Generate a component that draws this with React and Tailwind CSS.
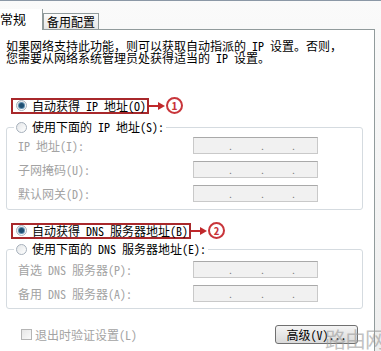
import React from 'react';

const font = { fontFamily: '"Noto Sans Mono CJK SC", "Noto Sans CJK SC", "Liberation Sans", sans-serif' };

const Radio = ({ checked }) => (
  <span className="flex h-[11px] w-[11px] shrink-0 items-center justify-center rounded-full border border-[#a6b0bb] bg-gradient-to-br from-[#e4e6e8] to-[#ffffff]">
    {checked && <span className="h-[5px] w-[5px] rounded-full bg-[#1f4f72] ring-1 ring-[#5f8fb0]" />}
  </span>
);

const Marker = ({ n }) => (
  <div className="flex items-center">
    <svg width="17" height="10" viewBox="0 0 17 10">
      <line x1="0" y1="5" x2="10" y2="5" stroke="#c0282b" strokeWidth="2" />
      <polygon points="9,1 16,5 9,9" fill="#c0282b" />
    </svg>
    <span className="flex h-[17px] w-[17px] items-center justify-center rounded-full border-2 border-[#c8353a] text-[11px] font-bold leading-none text-[#c8353a]">
      {n}
    </span>
  </div>
);

const IpBox = () => (
  <div className="flex h-[17px] w-[125px] items-center border border-[#c9c9c9] border-t-[#a9a9a9] bg-[#f1f1f1] pl-[34px] text-[10px] leading-none text-[#777]">
    <span className="w-[32px]">.</span>
    <span className="w-[31px]">.</span>
    <span>.</span>
  </div>
);

const Row = ({ label }) => (
  <div className="grid grid-cols-[175px_125px] items-center">
    <span className="whitespace-nowrap text-[12px] leading-none text-[#a3a3a3]">{label}</span>
    <IpBox />
  </div>
);

export default function App() {
  return (
    <div className="relative h-[351px] w-[381px] overflow-hidden bg-gradient-to-b from-[#fafafa] to-[#eeeeee] text-black" style={font}>
      <div className="h-px bg-[#8b98a6]" />
      {/* tabs */}
      <div className="flex h-[28px] items-end">
        <div className="relative z-10 -mb-px flex h-[21px] w-[43px] items-center border-r border-[#919b9c] bg-white pb-[2px] text-[13px] leading-none">
          常规
        </div>
        <div className="flex h-[16px] w-[56px] items-center justify-center border border-b-0 border-[#919b9c] bg-gradient-to-b from-[#fbfbfb] to-[#e6e6e6] text-[12px] leading-none">
          备用配置
        </div>
      </div>

      {/* panel */}
      <div className="flex h-[323px] w-[375px] flex-col border-t border-r border-[#919b9c] bg-white">
        <p className="whitespace-nowrap pl-[6px] pt-[10px] text-[12px] leading-[12px]">
          如果网络支持此功能，则可以获取自动指派的 IP 设置。否则，
          <br />
          您需要从网络系统管理员处获得适当的 IP 设置。
        </p>

        {/* IP */}
        <div className="ml-[11px] mt-[33px] flex items-center">
          <div className="flex h-[16px] items-center gap-[5px] whitespace-nowrap border-2 border-[#a8282b] pl-[3px] pr-[1px] text-[12px] leading-none">
            <Radio checked />
            <span>自动获得 IP 地址(O)</span>
          </div>
          <Marker n="1" />
        </div>
        <fieldset className="ml-[6px] mt-[6px] w-[357px] rounded-[3px] border border-[#d5dbe0] pb-[7px]">
          <legend className="ml-[7px] flex h-[14px] items-center gap-[5px] whitespace-nowrap px-[2px] text-[12px] leading-none">
            <Radio />
            <span>使用下面的 IP 地址(S):</span>
          </legend>
          <div className="flex flex-col gap-[7px] pl-[11px] pt-[3px]">
            <Row label="IP 地址(I):" />
            <Row label="子网掩码(U):" />
            <Row label="默认网关(D):" />
          </div>
        </fieldset>

        {/* DNS */}
        <div className="ml-[11px] mt-[12px] flex items-center">
          <div className="flex h-[16px] items-center gap-[5px] whitespace-nowrap border-2 border-[#a8282b] pl-[3px] pr-[1px] text-[12px] leading-none">
            <Radio checked />
            <span>自动获得 DNS 服务器地址(B)</span>
          </div>
          <Marker n="2" />
        </div>
        <fieldset className="ml-[6px] mt-[3px] w-[357px] rounded-[3px] border border-[#d5dbe0] pb-[6px]">
          <legend className="ml-[7px] flex h-[14px] items-center gap-[5px] whitespace-nowrap px-[2px] text-[12px] leading-none">
            <Radio />
            <span>使用下面的 DNS 服务器地址(E):</span>
          </legend>
          <div className="flex flex-col gap-[7px] pl-[11px] pt-[5px]">
            <Row label="首选 DNS 服务器(P):" />
            <Row label="备用 DNS 服务器(A):" />
          </div>
        </fieldset>

        {/* bottom */}
        <div className="mt-[16px] flex items-center justify-between pl-[21px] pr-[16px]">
          <div className="flex items-center gap-[3px] whitespace-nowrap text-[12px] leading-none text-[#a3a3a3]">
            <span className="h-[11px] w-[11px] border border-[#b5b5b5] bg-gradient-to-br from-[#e6e6e6] to-[#fafafa]" />
            <span>退出时验证设置(L)</span>
          </div>
          <button className="flex h-[19px] w-[83px] items-center justify-center whitespace-nowrap rounded-[3px] border border-[#707070] bg-gradient-to-b from-[#f4f4f4] to-[#dadada] text-[12px] leading-none">
            高级(V)...
          </button>
        </div>
      </div>

      {/* watermark */}
      <div className="pointer-events-none absolute bottom-[2px] right-[-4px] whitespace-nowrap text-[21px] leading-none tracking-[-1px] text-[#9a9a9a] opacity-60" style={{ fontFamily: '"Noto Sans CJK SC", sans-serif' }}>
        路由网
      </div>
    </div>
  );
}
